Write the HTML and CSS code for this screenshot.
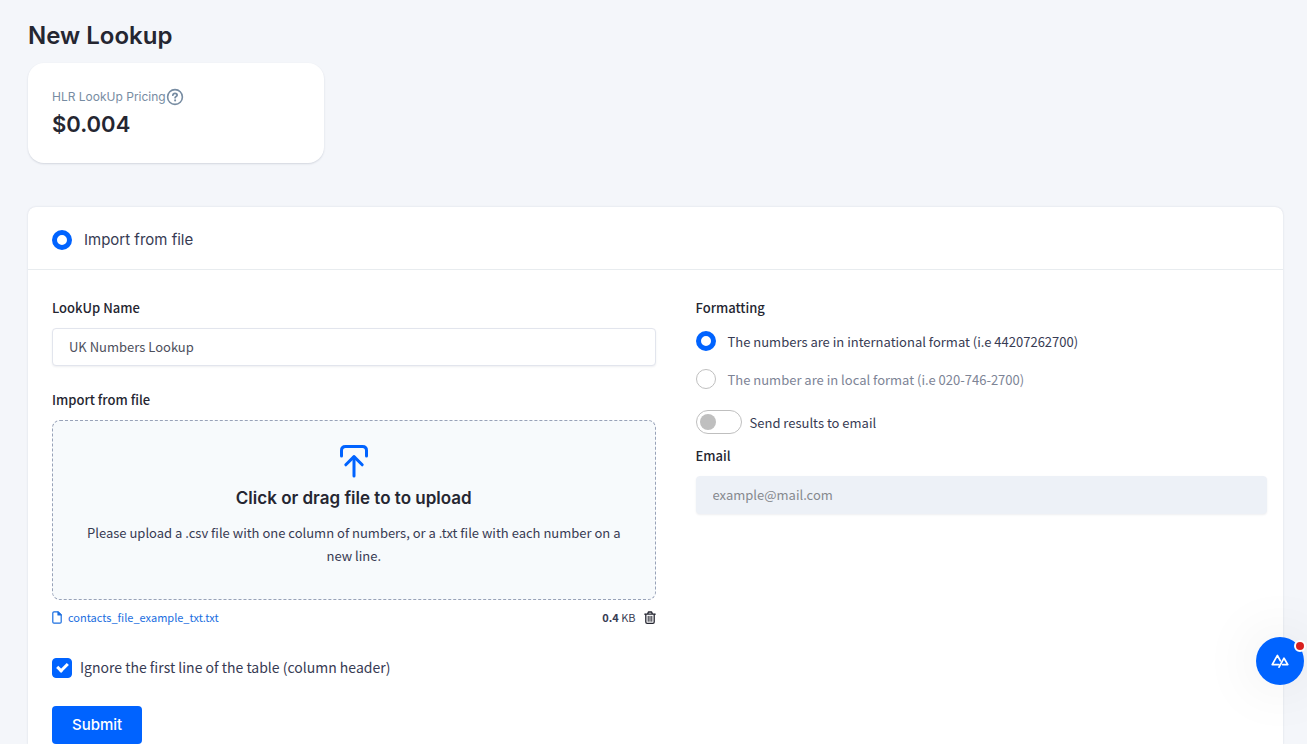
FILE: index.html
```html
<!DOCTYPE html>
<html lang="en">
<head>
  <meta charset="UTF-8">
  <meta name="viewport" content="width=device-width, initial-scale=1">
  <title>New Lookup</title>
  <link rel="stylesheet" href="styles.css">
</head>
<body>

  <main class="page">
    <h1 class="page-title">New Lookup</h1>

    <section class="price-card">
      <div class="price-label">
        <span>HLR LookUp Pricing</span>
        <svg class="help-icon" viewBox="0 0 18 18" fill="none" stroke="currentColor" stroke-linecap="round">
          <circle cx="9" cy="9" r="7.4" stroke-width="1.6"/>
          <path d="M6.9 7.2c.1-1.2 1-1.8 2.1-1.8s2.1.7 2.1 1.8c0 1.3-2 1.2-2 2.5" stroke-width="1.8"/>
          <path d="M9.1 12.3v.1" stroke-width="2"/>
        </svg>
      </div>
      <div class="price">$0.004</div>
    </section>

    <form class="card">
      <div class="card-header">
        <label class="choice source">
          <input type="radio" class="radio" name="source" checked>
          <span>Import from file</span>
        </label>
      </div>

      <div class="card-body">
        <div class="col-left">
          <label class="field-label" for="name">LookUp Name</label>
          <input type="text" class="text-input" id="name" value="UK Numbers Lookup">

          <div class="field-label upload-label">Import from file</div>
          <button type="button" class="dropzone">
            <svg class="upload-icon" viewBox="0 0 30 34" fill="none" stroke="currentColor" stroke-width="3" stroke-linecap="round" stroke-linejoin="round">
              <path d="M2.5 12V6.5Q2.5 2.5 6.5 2.5H23.5Q27.5 2.5 27.5 6.5V12"/>
              <path d="M15 32V13"/>
              <path d="M6.8 20.8L15 12.6L23.2 20.8"/>
            </svg>
            <strong class="drop-title">Click or drag file to to upload</strong>
            <span class="drop-text">Please upload a .csv file with one column of numbers, or a .txt file with each number on a new line.</span>
          </button>

          <div class="file-row">
            <a class="file-link" href="#">
              <svg class="file-icon" viewBox="0 0 10 13" fill="none" stroke="currentColor" stroke-width="1.2" stroke-linejoin="round">
                <path d="M2 .8H6L9.2 4V11Q9.2 12.2 8 12.2H2Q.8 12.2 .8 11V2Q.8 .8 2 .8Z"/>
                <path d="M6 .8V4H9.2Z" fill="currentColor"/>
              </svg>
              contacts_file_example_txt.txt
            </a>
            <span class="file-size"><b>0.4</b> KB</span>
            <button type="button" class="trash-btn" aria-label="Remove file">
              <svg class="trash-icon" viewBox="0 0 12 13" fill="none" stroke="currentColor" stroke-width="1.3" stroke-linecap="round" stroke-linejoin="round">
                <path d="M.8 3.2H11.2M3.6 3L4.4 1H7.6L8.4 3"/>
                <path d="M1.8 3.4V11Q1.8 12.3 3.1 12.3H8.9Q10.2 12.3 10.2 11V3.4"/>
                <path d="M4.2 5.3V10.3M6 5.3V10.3M7.8 5.3V10.3" stroke-width="1"/>
              </svg>
            </button>
          </div>

          <label class="ignore">
            <input type="checkbox" class="checkbox" checked>
            <span>Ignore the first line of the table (column header)</span>
          </label>

          <button type="submit" class="submit-btn">Submit</button>
        </div>

        <div class="col-right">
          <div class="field-label">Formatting</div>
          <label class="choice format">
            <input type="radio" class="radio" name="format" checked>
            <span>The numbers are in international format (i.e 44207262700)</span>
          </label>
          <label class="choice format muted">
            <input type="radio" class="radio" name="format">
            <span>The number are in local format (i.e 020-746-2700)</span>
          </label>
          <label class="switch-row">
            <input type="checkbox" class="switch" role="switch">
            <span>Send results to email</span>
          </label>
          <label class="field-label" for="email">Email</label>
          <input type="email" class="text-input" id="email" placeholder="example@mail.com" disabled>
        </div>
      </div>
    </form>
  </main>

  <button type="button" class="chat-btn" aria-label="Open help">
    <svg class="chat-icon" viewBox="0 0 18 14" fill="none" stroke="currentColor" stroke-width="1.7" stroke-linecap="round" stroke-linejoin="round">
      <path d="M8 10.6H1.2L6.4 1.4L9.4 6.8"/>
      <path d="M8 13.2L13 4.2L16.8 10.6H11.6"/>
    </svg>
    <span class="chat-dot"></span>
  </button>

</body>
</html>
```
FILE: styles.css
```css
* {
  box-sizing: border-box;
}

body {
  margin: 0;
  background-color: #f4f6fa;
  color: #373b53;
  font-family: "Noto Sans CJK SC", "Noto Sans", sans-serif;
  font-size: 13px;
  line-height: 20px;
}

button, input {
  font: inherit;
}

.page {
  padding: 21px 24px 0 28px;
}

.page-title {
  margin: 0 0 12px;
  color: #252631;
  font-family: Inter, sans-serif;
  font-size: 24px;
  font-weight: 600;
  line-height: 30px;
}

.price-card {
  width: 296px;
  margin-bottom: 44px;
  padding: 24px 24px 22px;
  background-color: #fff;
  border-radius: 16px;
  box-shadow: 0 1px 2px rgba(40, 50, 80, 0.16);
  font-family: Inter, sans-serif;
}

.price-label {
  display: flex;
  align-items: center;
  color: #778ca2;
  font-size: 12px;
}

.help-icon {
  width: 18px;
  height: 18px;
}

.price {
  color: #252631;
  font-size: 22px;
  font-weight: 600;
  line-height: 34px;
}

.card {
  background-color: #fff;
  border-radius: 8px 8px 0 0;
  box-shadow: 0 0 2px rgba(40, 50, 80, 0.16);
}

.card-header {
  padding: 23px 24px 19px;
  border-bottom: 1px solid #e8ecef;
}

.choice {
  display: flex;
  align-items: center;
  gap: 12px;
}

.source {
  font-family: Inter, sans-serif;
  font-size: 15px;
}

.radio {
  appearance: none;
  flex: none;
  width: 20px;
  height: 20px;
  margin: 0;
  border: 1px solid #bfbfbf;
  border-radius: 50%;
  background-color: #fff;
}

.radio:checked {
  border: 5px solid #0063ff;
}

.card-body {
  display: grid;
  grid-template-columns: 1fr 1fr;
  padding: 28px 0 0;
}

.col-left {
  padding-left: 24px;
}

.col-right {
  padding: 0 16px 0 40px;
}

.field-label {
  display: block;
  margin-bottom: 10px;
  color: #252631;
  font-weight: 500;
}

.text-input {
  display: block;
  width: 100%;
  height: 38px;
  padding: 0 16px 2px;
  border: 1px solid #e2e5ed;
  border-radius: 4px;
  background-color: #fff;
  box-shadow: 0 1px 2px rgba(40, 50, 80, 0.08);
  color: #4d4f5c;
}

.text-input:disabled {
  border-color: #edf1f7;
  background-color: #edf1f7;
}

.text-input::placeholder {
  color: #86898e;
}

.upload-label {
  margin-top: 24px;
}

.dropzone {
  display: flex;
  flex-direction: column;
  align-items: center;
  width: 100%;
  padding: 23px 32px 32px;
  border: 1px dashed #98a2b8;
  border-radius: 8px;
  background-color: #f7fafc;
  color: #373b53;
  cursor: pointer;
}

.upload-icon {
  width: 30px;
  height: 34px;
  margin-bottom: 9px;
  color: #0063ff;
}

.drop-title {
  margin-bottom: 12px;
  color: #252631;
  font-family: Inter, sans-serif;
  font-size: 17px;
  font-weight: 600;
  line-height: 22px;
}

.drop-text {
  line-height: 23px;
}

.file-row {
  display: flex;
  align-items: center;
  margin: 7px 0 29px;
  font-size: 11px;
}

.file-link {
  display: flex;
  align-items: center;
  gap: 6px;
  margin-right: auto;
  color: #1a6ee0;
  text-decoration: none;
}

.file-icon {
  width: 10px;
  height: 13px;
}

.trash-btn {
  display: flex;
  margin-left: 8px;
  padding: 0;
  border: none;
  background: none;
  color: #252631;
  cursor: pointer;
}

.trash-icon {
  width: 12px;
  height: 13px;
}

.ignore {
  display: flex;
  align-items: center;
  gap: 8px;
  margin-bottom: 27px;
  font-size: 14px;
  line-height: 23px;
}

.checkbox {
  appearance: none;
  display: flex;
  align-items: center;
  justify-content: center;
  width: 20px;
  height: 20px;
  margin: 0;
  border: 1px solid #bfbfbf;
  border-radius: 4px;
}

.checkbox:checked {
  border-color: #0063ff;
  background-color: #0063ff;
}

.checkbox:checked::before {
  content: "";
  box-sizing: border-box;
  width: 11px;
  height: 7px;
  margin-bottom: 3px;
  border: solid #fff;
  border-width: 0 0 3px 3px;
  transform: rotate(-45deg);
}

.submit-btn {
  display: block;
  height: 38px;
  padding: 0 20px;
  border: none;
  border-radius: 4px;
  background-color: #0063ff;
  color: #fff;
  font-family: Inter, sans-serif;
  font-size: 15px;
  font-weight: 500;
  cursor: pointer;
}

.format {
  margin: 13px 0 18px;
  line-height: 18px;
}

.muted {
  color: #7d8496;
}

.switch-row {
  display: flex;
  align-items: center;
  gap: 8px;
  margin: 21px 0 12px;
  line-height: 18px;
}

.format span,
.switch-row span {
  padding-top: 2px;
}

.switch {
  appearance: none;
  display: flex;
  align-items: center;
  width: 46px;
  height: 24px;
  margin: 0;
  padding: 0 3px;
  border: 1px solid #bfbfbf;
  border-radius: 12px;
  background-color: #fff;
}

.switch::before {
  content: "";
  width: 16px;
  height: 16px;
  border-radius: 50%;
  background-color: #bfbfbf;
}

.switch:checked {
  justify-content: flex-end;
}

.chat-btn {
  position: fixed;
  right: 3px;
  bottom: 59px;
  display: flex;
  align-items: center;
  justify-content: center;
  width: 48px;
  height: 48px;
  padding: 0;
  border: none;
  border-radius: 50%;
  background-color: #0063ff;
  box-shadow: 0 0 60px rgba(0, 0, 0, 0.1);
  color: #fff;
  cursor: pointer;
}

.chat-icon {
  width: 18px;
  height: 14px;
}

.chat-dot {
  position: absolute;
  top: 3px;
  right: -2px;
  width: 12px;
  height: 12px;
  border: 2px solid #fff;
  border-radius: 50%;
  background-color: #d9201f;
}
```
